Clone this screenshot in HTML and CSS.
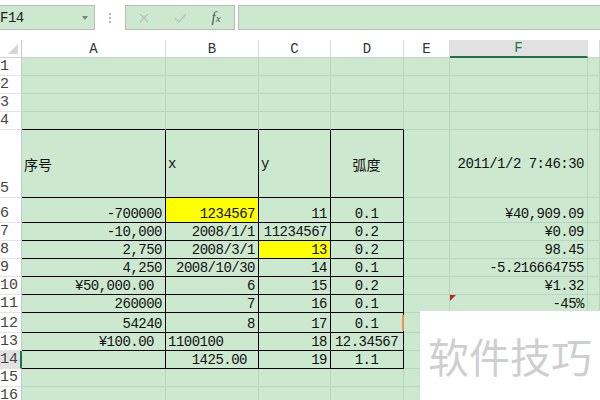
FILE: index.html
```html
<!DOCTYPE html>
<html lang="zh">
<head>
<meta charset="utf-8">
<title>Sheet</title>
<link rel="stylesheet" href="styles.css">
</head>
<body>
<div class="toolbar">
  <div class="namebox"><span>F14</span><span class="caret"></span></div>
  <div class="dots"><i></i><i></i><i></i></div>
  <div class="fxbox">
    <svg width="10" height="10" viewBox="0 0 10 10"><path d="M1 1L9 9M9 1L1 9" stroke="#bdbdbd" stroke-width="1.3" fill="none"/></svg>
    <svg width="13" height="10" viewBox="0 0 13 10"><path d="M1 5L4.8 9L12 1" stroke="#bdbdbd" stroke-width="1.4" fill="none"/></svg>
    <span class="fx">f<small>x</small></span>
  </div>
  <div class="formula"></div>
</div>

<div class="sheet">
  <div class="corner"><span class="tri"></span></div>
  <div class="ch">A</div><div class="ch">B</div><div class="ch">C</div><div class="ch">D</div><div class="ch">E</div><div class="ch sel">F</div><div class="ch"></div>

  <div class="rh">1</div><div class="c"></div><div class="c"></div><div class="c"></div><div class="c"></div><div class="c"></div><div class="c"></div><div class="c"></div>
  <div class="rh">2</div><div class="c"></div><div class="c"></div><div class="c"></div><div class="c"></div><div class="c"></div><div class="c"></div><div class="c"></div>
  <div class="rh">3</div><div class="c"></div><div class="c"></div><div class="c"></div><div class="c"></div><div class="c"></div><div class="c"></div><div class="c"></div>
  <div class="rh">4</div><div class="c bb"></div><div class="c bb"></div><div class="c bb"></div><div class="c bb"></div><div class="c"></div><div class="c"></div><div class="c"></div>

  <div class="rh">5</div>
  <div class="c bb br mid cjk">序号</div>
  <div class="c bb br mid">x</div>
  <div class="c bb br mid">y</div>
  <div class="c bb br mid m cjk">弧度</div>
  <div class="c mid"></div>
  <div class="c mid r">2011/1/2 7:46:30</div>
  <div class="c"></div>

  <div class="rh">6</div>
  <div class="c bb br r">-700000</div>
  <div class="c bb br r y">1234567</div>
  <div class="c bb br r">11</div>
  <div class="c bb br m">0.1</div>
  <div class="c"></div>
  <div class="c r">¥40,909.09</div>
  <div class="c"></div>

  <div class="rh">7</div>
  <div class="c bb br r">-10,000</div>
  <div class="c bb br r">2008/1/1</div>
  <div class="c bb br r">11234567</div>
  <div class="c bb br m">0.2</div>
  <div class="c"></div>
  <div class="c r">¥0.09</div>
  <div class="c"></div>

  <div class="rh">8</div>
  <div class="c bb br r">2,750</div>
  <div class="c bb br r">2008/3/1</div>
  <div class="c bb br r y">13</div>
  <div class="c bb br m">0.2</div>
  <div class="c"></div>
  <div class="c r">98.45</div>
  <div class="c"></div>

  <div class="rh">9</div>
  <div class="c bb br r">4,250</div>
  <div class="c bb br r">2008/10/30</div>
  <div class="c bb br r">14</div>
  <div class="c bb br m">0.1</div>
  <div class="c"></div>
  <div class="c r">-5.216664755</div>
  <div class="c"></div>

  <div class="rh">10</div>
  <div class="c bb br r acc">¥50,000.00</div>
  <div class="c bb br r">6</div>
  <div class="c bb br r">15</div>
  <div class="c bb br m">0.2</div>
  <div class="c"></div>
  <div class="c r">¥1.32</div>
  <div class="c"></div>

  <div class="rh">11</div>
  <div class="c bb br r">260000</div>
  <div class="c bb br r">7</div>
  <div class="c bb br r">16</div>
  <div class="c bb br m">0.1</div>
  <div class="c"></div>
  <div class="c r"><span class="flag"></span>-45%</div>
  <div class="c"></div>

  <div class="rh">12</div>
  <div class="c bb br r">54240</div>
  <div class="c bb br r">8</div>
  <div class="c bb br r">17</div>
  <div class="c bb br m">0.1<span class="mark"></span></div>
  <div class="c"></div>
  <div class="c r"></div>
  <div class="c"></div>

  <div class="rh">13</div>
  <div class="c bb br r acc">¥100.00</div>
  <div class="c bb br">1100100</div>
  <div class="c bb br r">18</div>
  <div class="c bb br m">12.34567</div>
  <div class="c"></div>
  <div class="c"></div>
  <div class="c"></div>

  <div class="rh sel">14</div>
  <div class="c bb br"></div>
  <div class="c bb br r acc">1425.00</div>
  <div class="c bb br r">19</div>
  <div class="c bb br m">1.1</div>
  <div class="c"></div>
  <div class="c"></div>
  <div class="c"></div>

  <div class="rh">15</div><div class="c"></div><div class="c"></div><div class="c"></div><div class="c"></div><div class="c"></div><div class="c"></div><div class="c"></div>
  <div class="rh">16</div><div class="c"></div><div class="c"></div><div class="c"></div><div class="c"></div><div class="c"></div><div class="c"></div><div class="c"></div>
</div>

<div class="wm">软件技巧</div>
</body>
</html>
```

FILE: styles.css
```css
html, body {
  margin: 0;
  padding: 0;
}
body {
  width: 600px;
  height: 400px;
  overflow: hidden;
  background: #fff;
  font-family: "Liberation Mono", "Noto Sans CJK SC", monospace;
  position: relative;
}

/* toolbar */
.toolbar {
  display: flex;
  align-items: flex-start;
  height: 40px;
  padding-top: 5px;
  box-sizing: border-box;
}
.namebox {
  width: 95px;
  height: 25px;
  box-sizing: border-box;
  border: 1px solid #bcbcbc;
  border-left: none;
  background: #cce8cf;
  display: flex;
  align-items: center;
  justify-content: space-between;
  padding: 0 6px 0 0;
  font-size: 14px;
  letter-spacing: -0.5px;
  color: #222;
}
.caret {
  width: 0;
  height: 0;
  border-left: 3.5px solid transparent;
  border-right: 3.5px solid transparent;
  border-top: 4px solid #808080;
}
.dots {
  width: 30px;
  height: 25px;
  display: flex;
  flex-direction: column;
  align-items: center;
  justify-content: center;
  gap: 2px;
}
.dots i {
  display: block;
  width: 2px;
  height: 2px;
  background: #b4b4b4;
}
.fxbox {
  width: 110px;
  height: 25px;
  box-sizing: border-box;
  border: 1px solid #bcbcbc;
  background: #cce8cf;
  display: grid;
  grid-template-columns: 36px 36px 36px;
  align-items: center;
  justify-items: center;
}
.fx {
  font-family: "Liberation Serif", serif;
  font-style: italic;
  font-size: 15px;
  color: #555;
  line-height: 1;
}
.fx small {
  font-size: 11px;
}
.formula {
  flex: 1;
  margin-left: 3px;
  margin-right: -2px;
  height: 25px;
  box-sizing: border-box;
  border: 1px solid #bcbcbc;
  background: #cce8cf;
}

/* sheet */
.sheet {
  display: grid;
  grid-template-columns: 22px 144px 93px 72px 73px 46px 138px 12px;
  grid-template-rows: 18px 18px 18px 18px 18px 68px 25px 18px 18px 18px 18px 18px 20px 18px 18px 18px 18px;
}
.corner {
  background: #fff;
  border-right: 1px solid #c8c8c8;
  border-bottom: 1px solid #d0d0d0;
  position: relative;
  box-sizing: border-box;
}
.tri {
  position: absolute;
  right: 3px;
  bottom: 3px;
  width: 0;
  height: 0;
  border-left: 10px solid transparent;
  border-bottom: 10px solid #d6d6d6;
}
.ch {
  background: #fff;
  border-right: 1px solid #dadada;
  border-bottom: 1px solid #d0d0d0;
  box-sizing: border-box;
  display: flex;
  align-items: center;
  justify-content: center;
  font-size: 14px;
  color: #333;
}
.ch.sel {
  background: #e1e1e1;
  border-bottom: 2px solid #217346;
  color: #217346;
}
.rh {
  background: #fff;
  border-right: 1px solid #c8c8c8;
  border-bottom: 1px solid #e4e4e4;
  box-sizing: border-box;
  display: flex;
  align-items: flex-end;
  font-size: 15px;
  line-height: 16px;
  color: #444;
}
.rh.sel {
  background: #e1e1e1;
  border-right: 2px solid #217346;
}
.c {
  background: #cce8cf;
  border-right: 1px solid #b9d5bc;
  border-bottom: 1px solid #b9d5bc;
  box-sizing: border-box;
  display: flex;
  align-items: flex-end;
  padding: 0 3px 0 2px;
  font-size: 14px;
  letter-spacing: -0.5px;
  line-height: 16px;
  color: #111;
  white-space: nowrap;
  position: relative;
  min-width: 0;
}
.r { justify-content: flex-end; }
.m { justify-content: center; }
.mid { align-items: center; }
.bb { border-bottom-color: #000; }
.br { border-right-color: #000; }
.y { background: #ffff00; }
.acc { padding-right: 11px; }
.cjk {
  font-family: "Noto Sans CJK SC", sans-serif;
  letter-spacing: 0;
  font-size: 14px;
}
.flag {
  position: absolute;
  left: 0;
  top: 0;
  width: 0;
  height: 0;
  border-top: 6px solid #c4281c;
  border-right: 6px solid transparent;
}
.mark {
  position: absolute;
  right: -1px;
  top: 2px;
  width: 2px;
  height: 16px;
  background: #f0904a;
}

/* watermark overlay */
.wm {
  position: absolute;
  left: 420px;
  top: 311px;
  width: 180px;
  height: 89px;
  box-sizing: border-box;
  padding-left: 8px;
  background: #fff;
  font-family: "Noto Sans CJK SC", sans-serif;
  font-size: 41px;
  line-height: 89px;
  color: #cfcfcf;
  white-space: nowrap;
  overflow: hidden;
}
```
